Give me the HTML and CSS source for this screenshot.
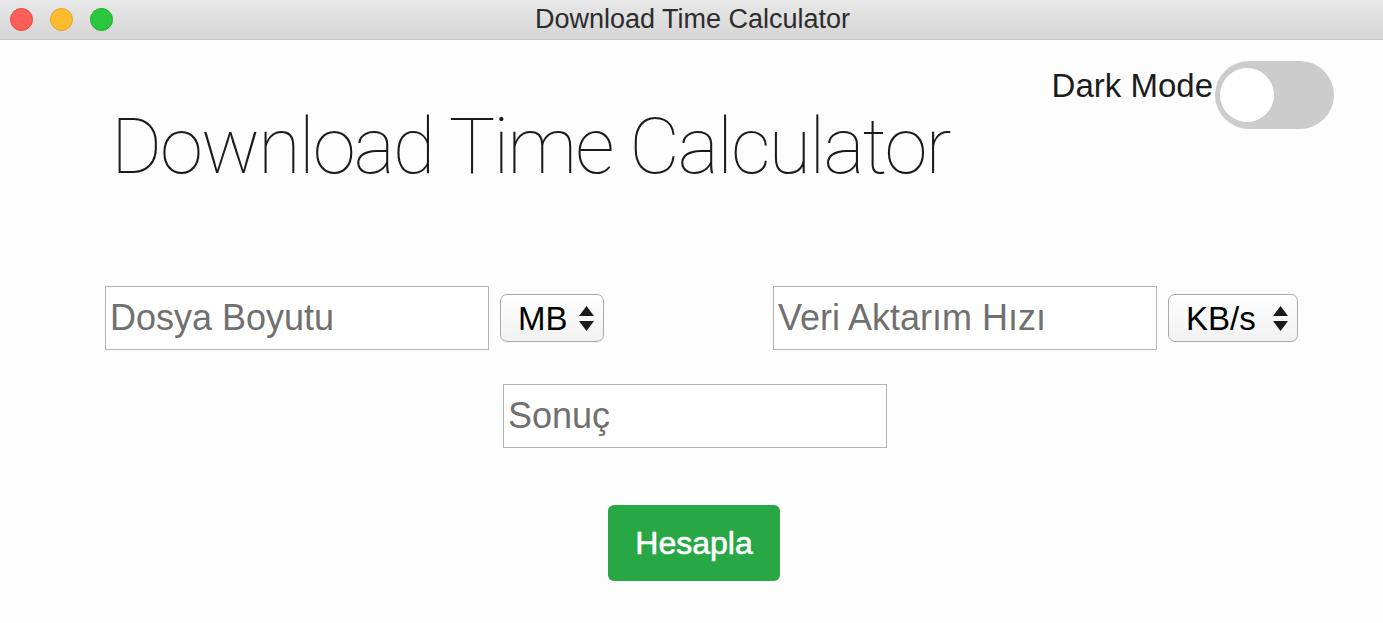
FILE: index.html
```html
<!DOCTYPE html>
<html lang="tr">
<head>
<meta charset="utf-8">
<title>Download Time Calculator</title>
<link rel="stylesheet" href="styles.css">
</head>
<body>
<div class="window">
  <div class="titlebar">
    <div class="lights">
      <span class="light red"></span>
      <span class="light yellow"></span>
      <span class="light green"></span>
    </div>
    <div class="title">Download Time Calculator</div>
  </div>
  <main class="content">
    <header class="header">
      <h1 class="heading">Download Time Calculator</h1>
      <div class="dark-mode">
        <span class="dm-label">Dark Mode</span>
        <span class="toggle"><span class="knob"></span></span>
      </div>
    </header>
    <div class="row row-inputs">
      <div class="group">
        <input class="field" type="text" placeholder="Dosya Boyutu">
        <div class="select sel-mb">
          <span class="sel-text">MB</span>
          <svg class="arrows" width="15" height="26" viewBox="0 0 15 26"><path d="M7.5 0 L15 10 L0 10 Z" fill="#1a1a1a"/><path d="M0 15 L15 15 L7.5 25 Z" fill="#1a1a1a"/></svg>
        </div>
      </div>
      <div class="group">
        <input class="field" type="text" placeholder="Veri Aktarım Hızı">
        <div class="select sel-kb">
          <span class="sel-text">KB/s</span>
          <svg class="arrows" width="15" height="26" viewBox="0 0 15 26"><path d="M7.5 0 L15 10 L0 10 Z" fill="#1a1a1a"/><path d="M0 15 L15 15 L7.5 25 Z" fill="#1a1a1a"/></svg>
        </div>
      </div>
    </div>
    <div class="row row-result">
      <input class="field" type="text" placeholder="Sonuç">
    </div>
    <div class="row row-button">
      <button class="btn">Hesapla</button>
    </div>
  </main>
</div>
</body>
</html>
```
FILE: styles.css
```css
html, body {
  margin: 0;
  padding: 0;
  background: #fdfdfd;
  font-family: "Liberation Sans", Arial, sans-serif;
}
.window {
  width: 1383px;
  height: 623px;
  overflow: hidden;
}
.titlebar {
  height: 39px;
  border-bottom: 1px solid #c4c4c4;
  background: linear-gradient(#e9e8e9, #d6d5d6);
  display: flex;
  align-items: center;
  position: relative;
}
.lights {
  display: flex;
  gap: 17px;
  padding-left: 10px;
  margin-top: -1px;
}
.light {
  width: 23px;
  height: 23px;
  border-radius: 50%;
  box-sizing: border-box;
}
.red { background: #fc5f57; border: 1px solid #e2463f; }
.yellow { background: #fdbc2e; border: 1px solid #e0a22a; }
.green { background: #29c840; border: 1px solid #1aab29; }
.title {
  position: absolute;
  left: 0;
  right: 0;
  top: 0;
  bottom: 0;
  display: flex;
  align-items: center;
  justify-content: center;
  font-size: 27px;
  color: #2c2c2c;
  pointer-events: none;
  padding-left: 2px;
}
.content {
  display: flex;
  flex-direction: column;
}
.header {
  display: flex;
  justify-content: space-between;
  align-items: flex-start;
  padding: 21px 49px 0 111px;
}
.heading {
  margin: 47px 0 0 0;
  font-family: "Roboto", "Helvetica Neue", sans-serif;
  font-weight: 100;
  font-size: 78px;
  line-height: 78px;
  letter-spacing: -2px;
  color: #1a1a1a;
  white-space: nowrap;
}
.dark-mode {
  display: flex;
  align-items: flex-start;
  gap: 2px;
}
.dm-label {
  font-size: 33px;
  line-height: 38px;
  margin-top: 6px;
  color: #1c1c1c;
}
.toggle {
  width: 119px;
  height: 68px;
  border-radius: 34px;
  background: #cccccc;
  display: flex;
  align-items: center;
  padding-left: 5px;
  box-sizing: border-box;
}
.knob {
  width: 54px;
  height: 54px;
  border-radius: 50%;
  background: #ffffff;
}
.row {
  display: flex;
}
.row-inputs {
  margin-top: 100px;
  padding-left: 105px;
  gap: 169px;
  align-items: center;
}
.group {
  display: flex;
  align-items: center;
  gap: 11px;
}
.field {
  width: 384px;
  height: 64px;
  box-sizing: border-box;
  border: 1px solid #b4b4b4;
  border-radius: 0;
  background: #ffffff;
  padding: 0 0 0 4px;
  font-family: "Liberation Sans", Arial, sans-serif;
  font-size: 36px;
  color: #222;
  outline: none;
}
.field::placeholder {
  color: #707070;
}
.select {
  height: 48px;
  box-sizing: border-box;
  border: 1px solid #a9a9a9;
  border-radius: 7px;
  background: linear-gradient(#ffffff, #f1f1f1);
  display: flex;
  align-items: center;
  justify-content: space-between;
  padding: 0 9px 0 17px;
  font-size: 33px;
  color: #000;
}
.sel-mb { width: 104px; }
.sel-kb { width: 130px; }
.sel-text {
  line-height: 1;
}
.arrows {
  display: block;
  margin-top: 2px;
}
.row-result {
  margin-top: 34px;
  padding-left: 503px;
}
.row-button {
  margin-top: 57px;
  padding-left: 608px;
}
.btn {
  width: 172px;
  height: 76px;
  border: none;
  border-radius: 6px;
  background: #28a745;
  color: #ffffff;
  font-family: "Liberation Sans", Arial, sans-serif;
  font-size: 32px;
  -webkit-text-stroke: 0.6px #ffffff;
  padding: 0;
}
```
